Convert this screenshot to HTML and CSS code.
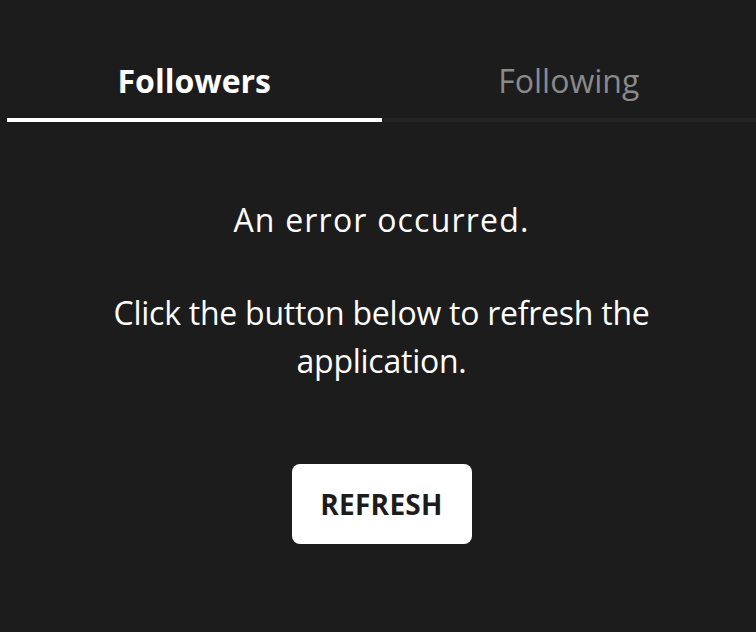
FILE: index.html
```html
<!DOCTYPE html>
<html lang="en">
<head>
<meta charset="utf-8">
<title>Followers</title>
<link rel="stylesheet" href="styles.css">
</head>
<body>
<div class="page">
  <nav class="tabs">
    <div class="tab tab-active">Followers</div>
    <div class="tab">Following</div>
  </nav>
  <main class="error">
    <p class="error-title">An error occurred.</p>
    <p class="error-text">Click the button below to refresh the application.</p>
    <button class="refresh" type="button">REFRESH</button>
  </main>
</div>
</body>
</html>
```
FILE: styles.css
```css
* { box-sizing: border-box; }
html, body {
  margin: 0;
  height: 100%;
  background: #1c1c1c;
}
body {
  font-family: "Open Sans", "Noto Sans", sans-serif;
  color: #ffffff;
}
.page {
  padding-left: 7px;
  min-height: 100%;
}
.tabs {
  display: flex;
}
.tab {
  flex: 1 1 0;
  text-align: center;
  font-size: 32px;
  line-height: 48px;
  padding-top: 57px;
  padding-bottom: 13px;
  color: #8a8a8a;
  border-bottom: 4px solid #232323;
}
.tab-active {
  color: #ffffff;
  font-weight: 700;
  border-bottom-color: #ffffff;
}
.error {
  display: flex;
  flex-direction: column;
  align-items: center;
  text-align: center;
  padding: 74px 90px 0;
}
.error-title {
  margin: 0;
  font-size: 32px;
  line-height: 48px;
  letter-spacing: 1.2px;
}
.error-text {
  margin: 45px 0 0;
  font-size: 32px;
  line-height: 48px;
  letter-spacing: -0.25px;
}
.refresh {
  margin-top: 79px;
  width: 180px;
  height: 80px;
  border: none;
  border-radius: 8px;
  background: #ffffff;
  color: #1c1c1c;
  font-family: "Open Sans", "Noto Sans", sans-serif;
  font-weight: 700;
  font-size: 28px;
  letter-spacing: 0.3px;
}
```
